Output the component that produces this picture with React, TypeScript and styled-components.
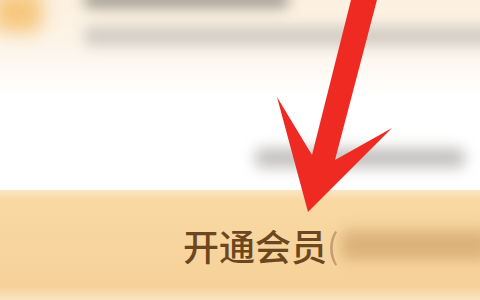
import React from 'react'
import styled, { createGlobalStyle } from 'styled-components'

const GlobalStyle = createGlobalStyle`
  html, body {
    margin: 0;
    padding: 0;
    background: #ffffff;
  }
  body {
    font-family: "Noto Sans CJK SC", "Noto Sans", sans-serif;
  }
`

const App = () => {
  return (
    <Screen>
      <GlobalStyle />

      <Header>
        <Avatar />
        <HeaderText>
          <BlurLine w={205} h={16} tone="#4a4a4a" />
          <BlurLine w={420} h={20} tone="#aaa7a3" />
        </HeaderText>
      </Header>

      <Middle>
        <BlurLine w={210} h={20} tone="#8a8784" />
      </Middle>

      <VipBar>
        <VipLabel>开通会员</VipLabel>
        <Paren>(</Paren>
        <BlurLine w={150} h={30} tone="#c09156" />
      </VipBar>

      <Arrow viewBox="0 0 480 300">
        <polygon
          points="352,-4 378,-4 335,160 392,128 308,212 277,97 312,155"
          fill="#ee2a22"
        />
      </Arrow>
    </Screen>
  )
}

const Screen = styled.div`
  position: relative;
  width: 480px;
  height: 300px;
  overflow: hidden;
  display: flex;
  flex-direction: column;
  background: #ffffff;
`

const Header = styled.div`
  height: 95px;
  flex-shrink: 0;
  display: flex;
  align-items: flex-start;
  gap: 42px;
  background: linear-gradient(180deg, #fcf0df 0%, #fdf5eb 55%, #ffffff 100%);
`

const Avatar = styled.div`
  width: 48px;
  height: 40px;
  margin-top: -8px;
  margin-left: -6px;
  flex-shrink: 0;
  background: #f6c77e;
  border-radius: 10px;
  filter: blur(9px);
`

const HeaderText = styled.div`
  display: flex;
  flex-direction: column;
  gap: 18px;
  margin-top: -8px;
`

const BlurLine = styled.div<{ w: number; h: number; tone: string }>`
  width: ${p => p.w}px;
  height: ${p => p.h}px;
  flex-shrink: 0;
  background: ${p => p.tone};
  border-radius: 6px;
  opacity: 0.5;
  filter: blur(7px);
`

const Middle = styled.div`
  height: 95px;
  flex-shrink: 0;
  display: flex;
  align-items: center;
  padding-left: 255px;
  padding-top: 30px;
  box-sizing: border-box;
`

const VipBar = styled.div`
  flex: 1;
  display: flex;
  align-items: center;
  padding-left: 183px;
  white-space: nowrap;
  background: linear-gradient(180deg, #fce6c2 0%, #f9d8a2 10%, #f6d29a 88%, #fae4c2 100%);
`

const VipLabel = styled.span`
  flex-shrink: 0;
  font-size: 36px;
  font-weight: 500;
  color: #6c4620;
  line-height: 1;
`

const Paren = styled.span`
  flex-shrink: 0;
  font-size: 34px;
  color: #b89068;
  line-height: 1;
  margin-right: 2px;
  opacity: 0.8;
`

const Arrow = styled.svg`
  position: absolute;
  left: 0;
  top: 0;
  width: 480px;
  height: 300px;
  pointer-events: none;
`

export default App
